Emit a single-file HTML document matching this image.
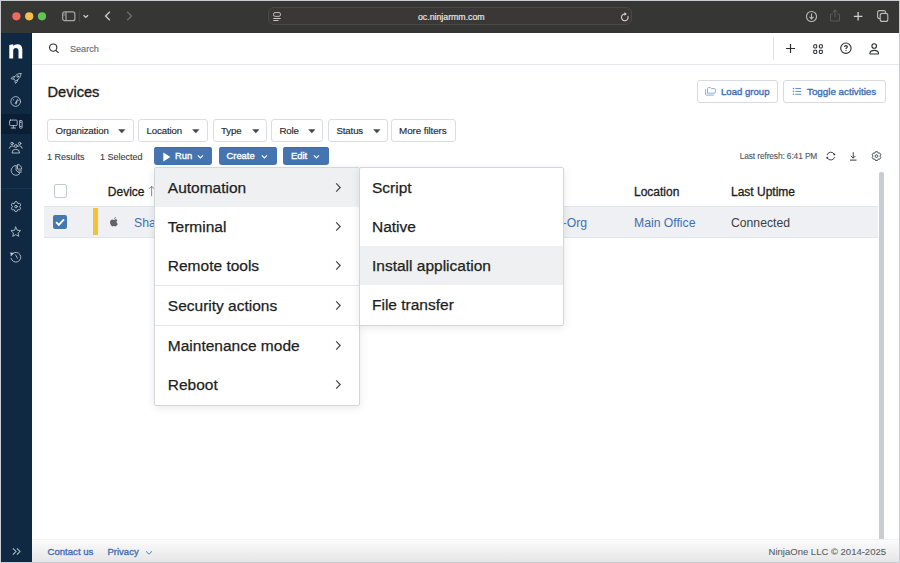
<!DOCTYPE html>
<html><head><meta charset="utf-8">
<style>
*{margin:0;padding:0;box-sizing:border-box}
html,body{width:900px;height:563px;overflow:hidden;background:#c9ccd1;font-family:"Liberation Sans",sans-serif}
.a{position:absolute}
.t{position:absolute;white-space:nowrap;line-height:1}
.sb{-webkit-text-stroke:0.35px currentColor}
.sb2{-webkit-text-stroke:0.3px currentColor}
#win{position:absolute;left:1px;top:1px;width:898px;height:561px;background:#fff;overflow:hidden}
#title{position:absolute;left:0;top:0;width:898px;height:32px;background:#363634}
#side{position:absolute;left:0;top:32px;width:31px;height:529px;background:#0e2941}
#topbar{position:absolute;left:31px;top:32px;width:867px;height:32px;background:#fff;border-bottom:1px solid #e4e7eb}
.fbtn{position:absolute;top:118px;height:23px;border:1px solid #dadde2;border-radius:3px;background:#fff}
.fbtn span{position:absolute;top:6px;font-size:9.7px;letter-spacing:-0.15px;color:#26292d;-webkit-text-stroke:0.15px #26292d;line-height:1;white-space:nowrap}
.bbtn{position:absolute;top:146px;height:18px;background:#4475b0;border-radius:3px;box-shadow:inset 0 1px 0 #3c6cab}
.bbtn span{position:absolute;top:4.3px;font-size:9.4px;color:#fff;-webkit-text-stroke:0.35px #fff;line-height:1;white-space:nowrap}
.menu{position:absolute;background:#fff;border:1px solid #d3d7dc;border-radius:2px;box-shadow:0 2px 8px rgba(0,0,0,0.09)}
.mi{position:absolute;left:0;height:39px;width:100%}
.mi span{position:absolute;left:12.8px;top:11.7px;font-size:15.5px;color:#1c1e21;-webkit-text-stroke:0.25px #1c1e21;line-height:1;white-space:nowrap}
</style></head><body>
<div id="win">
  <div id="title">
    <svg class="a" style="left:0;top:0" width="60" height="32" viewBox="0 0 60 32"><circle cx="15.4" cy="15.3" r="4.1" fill="#ee6a5f"/><circle cx="28.2" cy="15.3" r="4.1" fill="#f5bf4f"/><circle cx="41" cy="15.3" r="4.1" fill="#61c454"/></svg>
    <svg class="a" style="left:61px;top:10px" width="14" height="11" viewBox="0 0 14 11"><rect x="0.65" y="0.85" width="12.2" height="8.8" rx="2" fill="none" stroke="#a9a8a6" stroke-width="1.2"/><line x1="4" y1="1" x2="4" y2="9.6" stroke="#a9a8a6" stroke-width="1.2"/><line x1="2.1" y1="2.6" x2="2.1" y2="4.6" stroke="#a9a8a6" stroke-width="0.9"/></svg>
    <div class="a" style="left:78px;top:10px;width:1px;height:11px;background:#484745"></div>
    <svg class="a" style="left:82px;top:13px" width="8" height="6" viewBox="0 0 8 6"><path d="M0.6 1.2 L2.8 3.4 L5 1.2" fill="none" stroke="#cfcecc" stroke-width="1.3"/></svg>
    <svg class="a" style="left:101.5px;top:9.6px" width="9" height="11" viewBox="0 0 9 11"><path d="M6.8 0.8 L2.6 5 L6.8 9.2" fill="none" stroke="#c9c8c6" stroke-width="1.4"/></svg>
    <svg class="a" style="left:124px;top:9.6px" width="9" height="11" viewBox="0 0 9 11"><path d="M2.2 0.8 L6.4 5 L2.2 9.2" fill="none" stroke="#6d6c6a" stroke-width="1.4"/></svg>
    <div class="a" style="left:267px;top:6px;width:364px;height:18px;border:1px solid #4a4947;border-radius:6px;background:#393836"></div>
    <svg class="a" style="left:272px;top:11px" width="10" height="10" viewBox="0 0 10 10"><rect x="0.55" y="0.55" width="6.9" height="3.8" rx="1.5" fill="none" stroke="#c4c3c1" stroke-width="0.95"/><line x1="0.3" y1="6.5" x2="7.7" y2="6.5" stroke="#c4c3c1" stroke-width="1"/><line x1="0.3" y1="8.5" x2="5.5" y2="8.5" stroke="#c4c3c1" stroke-width="1"/></svg>
    <div class="t" style="left:417px;top:12px;font-size:8.75px;color:#e6e5e3;-webkit-text-stroke:0.2px #e6e5e3">oc.ninjarmm.com</div>
    <svg class="a" style="left:618px;top:10px" width="11" height="12" viewBox="0 -1 11 12"><path d="M5.80 2.05 A3.35 3.35 0 1 0 8.84 3.98" fill="none" stroke="#cfcecc" stroke-width="1.1"/><path d="M5.4 0.3 L7.8 2.05 L5.4 3.8 Z" fill="#dddcda"/></svg>
    <svg class="a" style="left:804px;top:8.7px" width="13" height="13" viewBox="0 0 13 13"><circle cx="6.5" cy="6.5" r="5" fill="none" stroke="#bdbcba" stroke-width="1.1"/><path d="M6.5 3.6 V8.9 M4.5 6.9 L6.5 8.9 L8.5 6.9" fill="none" stroke="#bdbcba" stroke-width="1.1"/></svg>
    <svg class="a" style="left:827.8px;top:8px" width="12" height="13" viewBox="0 0 12 13"><path d="M4 5 H2.5 Q1.5 5 1.5 6 V11 Q1.5 12 2.5 12 H9.5 Q10.5 12 10.5 11 V6 Q10.5 5 9.5 5 H8 M6 1 V8.2 M4 3 L6 1 L8 3" fill="none" stroke="#5a5957" stroke-width="1.1"/></svg>
    <svg class="a" style="left:852.3px;top:9.5px" width="11" height="11" viewBox="0 0 11 11"><path d="M5.1 1 V9.6 M0.8 5.3 H9.4" fill="none" stroke="#cfcecc" stroke-width="1.3"/></svg>
    <svg class="a" style="left:875.5px;top:9.2px" width="13" height="13" viewBox="0 0 13 13"><rect x="0.6" y="0.6" width="8" height="8" rx="2" fill="none" stroke="#bdbcba" stroke-width="1.1"/><rect x="3.2" y="3.4" width="7.6" height="8" rx="2" fill="#363634" stroke="#bdbcba" stroke-width="1.1"/></svg>

  </div>
  <div id="side">
    <svg class="a" style="left:0;top:0" width="31" height="40" viewBox="0 0 31 40"><path d="M8.3 12 L12.2 11.3 V12.8 Q13.6 11.3 16.2 11.3 Q21.3 11.3 21.3 16.6 V25.4 H17.5 V17.4 Q17.5 14.9 15.1 14.9 Q12.2 14.9 12.2 17.6 V25.4 H8.3 Z" fill="#fff"/></svg>
    <div class="a" style="left:0;top:81px;width:31px;height:20px;background:#0a1f34"></div>
    <div class="a" style="left:30px;top:0;width:1px;height:141px;background:#0a2135"></div>
    <svg class="a" style="left:-1px;top:-1px" width="32" height="240" viewBox="0 0 32 240" fill="none" stroke="#c2cad4" stroke-width="0.85" stroke-linecap="round" stroke-linejoin="round">
      <!-- rocket -->
      <path d="M20.9 41.5 C18 41.3 15 43 13.6 46.8 L15.6 48.8 C19.4 47.4 21.1 44.4 20.9 41.5 Z"/>
      <circle cx="17.9" cy="44.5" r="0.9"/>
      <path d="M14.4 44.4 Q12.1 44.5 11.1 46.6 L13.3 47.3 M17.7 48 Q17.6 50.3 15.5 51.3 L14.8 49.2"/>
      <!-- dashboard -->
      <circle cx="15.7" cy="69.5" r="4.85"/>
      <path d="M15.1 71.2 L17.7 67.1 L16.5 71.7 Z" fill="#c2cad4" stroke-width="0.5"/>
      <path d="M13.1 67.5 L13.6 67.9 M18.7 68.3 L19.2 68.1"/>
      <!-- devices -->
      <rect x="9.6" y="88.1" width="7.6" height="5.5" rx="0.9"/>
      <path d="M13.4 93.4 V95.9 M11.2 96 H15.6"/>
      <rect x="19.6" y="88.5" width="2.5" height="7.7" rx="0.6"/>
      <circle cx="20.85" cy="90.2" r="0.7" fill="#c2cad4" stroke="none"/><circle cx="20.85" cy="94.4" r="0.7" fill="#c2cad4" stroke="none"/>
      <!-- users -->
      <circle cx="15.85" cy="114" r="1.45"/>
      <path d="M12 120.6 Q12 117.2 15.8 117.2 Q19.6 117.2 19.6 120.6 Z"/>
      <circle cx="12" cy="111.5" r="1.2"/><circle cx="19.7" cy="111.5" r="1.2"/>
      <path d="M9.4 116.3 Q9.6 113.9 12.1 113.9 Q12.9 113.9 13.5 114.3 M22.2 116.3 Q22 113.9 19.6 113.9 Q18.8 113.9 18.2 114.3"/>
      <!-- pie -->
      <g transform="translate(0.4,-0.8)">
      <path d="M15.5 134.3 A4.9 4.9 0 1 0 19.4 142.3 L15.9 139.2 Z"/>
      <path d="M17.1 137.5 V133.3 A4.2 4.2 0 0 1 21.3 137.5 Z"/>
      <path d="M18.2 139.7 L21.2 139.7 M18.9 141.1 L20.6 141.1" stroke-width="0.8"/></g>
      <!-- gear -->
      <path d="M14.23 171.53 L15.05 169.69 L16.95 169.69 L17.77 171.53 L19.77 171.32 L20.73 172.97 L19.55 174.60 L20.73 176.23 L19.77 177.88 L17.77 177.67 L16.95 179.51 L15.05 179.51 L14.23 177.67 L12.23 177.88 L11.27 176.23 L12.45 174.60 L11.27 172.97 L12.23 171.32 Z" stroke-linejoin="miter"/>
      <circle cx="16" cy="174.6" r="1.3"/>
      <!-- star -->
      <path d="M15.75 195.10 L17.19 198.22 L20.60 198.62 L18.08 200.96 L18.75 204.33 L15.75 202.65 L12.75 204.33 L13.42 200.96 L10.90 198.62 L14.31 198.22 Z"/>
      <!-- history -->
      <path d="M12.52 221.56 A4.9 4.9 0 1 1 11.07 226.47"/>
      <path d="M10.6 220.7 L13.7 221.2 L11.2 224 Z" fill="#c2cad4" stroke-width="0.4"/>
      <path d="M15.6 222.9 L17.4 226.2"/>
    </svg>
    <div class="a" style="left:0;top:155px;width:31px;height:1px;background:#173553"></div>
    <svg class="a" style="left:0;top:508px" width="31" height="20" viewBox="0 0 31 20" fill="none" stroke="#b9c2cc" stroke-width="1.05"><path d="M11.9 7.4 L15 10.5 L11.9 13.6 M15.9 7.4 L19 10.5 L15.9 13.6"/></svg>
  </div>
  
  <div id="topbar">
    <svg class="a" style="left:16px;top:10px" width="12" height="12" viewBox="0 0 12 12"><circle cx="5.2" cy="4.6" r="3.65" fill="none" stroke="#2b2e33" stroke-width="1.15"/><path d="M7.9 7.3 L10.5 9.9" stroke="#2b2e33" stroke-width="1.2"/></svg>
    <div class="t" style="left:38px;top:12px;font-size:9.1px;color:#676c74;-webkit-text-stroke:0.15px #676c74">Search</div>
    <div class="a" style="left:740.5px;top:4px;width:1px;height:23px;background:#dfe3e8"></div>
    <svg class="a" style="left:753px;top:10.2px" width="11" height="11" viewBox="0 0 11 11"><path d="M5.5 1 V10 M1 5.5 H10" stroke="#2b2e33" stroke-width="1.2"/></svg>
    <svg class="a" style="left:781px;top:11px" width="11" height="11" viewBox="0 0 11 11" fill="none" stroke="#2b2e33" stroke-width="1.05"><rect x="0.75" y="0.8" width="3" height="3.1" rx="0.8"/><rect x="6.35" y="0.8" width="3" height="3.1" rx="0.8"/><rect x="0.75" y="6.3" width="3" height="3.1" rx="0.8"/><rect x="6.35" y="6.3" width="3" height="3.1" rx="0.8"/></svg>
    <svg class="a" style="left:808px;top:9px" width="13" height="13" viewBox="0 0 13 13" fill="none" stroke="#2b2e33" stroke-width="1.1"><circle cx="5.9" cy="6.2" r="5.2"/><path d="M4.6 5 Q4.6 3.6 5.95 3.6 Q7.3 3.6 7.3 4.8 Q7.3 5.6 6.5 6 Q5.95 6.3 5.95 7" stroke-width="1.2"/><circle cx="5.95" cy="8.6" r="0.65" fill="#2b2e33" stroke="none"/></svg>
    <svg class="a" style="left:837px;top:10px" width="11" height="12" viewBox="0 0 11 12" fill="none" stroke="#2b2e33" stroke-width="1.1"><circle cx="5.2" cy="3" r="2.3"/><path d="M1.6 11 H8.8 Q9.6 11 9.5 10.2 Q9 7.4 5.2 7.4 Q1.4 7.4 0.9 10.2 Q0.8 11 1.6 11 Z"/></svg>
  </div>
  <div class="t sb" style="left:46.5px;top:84px;font-size:14.6px;color:#1b1d20">Devices</div>
  <div class="a" style="left:696px;top:79px;width:81px;height:23px;border:1px solid #d6dbe1;border-radius:3px"></div>
  <svg class="a" style="left:703px;top:85px" width="14" height="12" viewBox="0 0 14 12" fill="none" stroke="#86a9d6" stroke-width="0.95"><path d="M3.5 7.2 V2.5 Q3.5 1.6 4.4 1.6 H6.5 L7.5 2.6 H10.5 Q11.3 2.6 11.3 3.4 V6.4 Q11.3 7.2 10.5 7.2 Z"/><path d="M1.6 3.1 V8.1 Q1.6 9.1 2.6 9.1 H9.8"/></svg>
  <div class="t sb" style="left:720px;top:85.5px;font-size:9.6px;color:#3f6eb0">Load group</div>
  <div class="a" style="left:782px;top:79px;width:103px;height:23px;border:1px solid #d6dbe1;border-radius:3px"></div>
  <svg class="a" style="left:791px;top:86px" width="11" height="10" viewBox="0 0 11 10"><g fill="#4f7dbd"><circle cx="1.5" cy="1.55" r="0.8"/><circle cx="1.5" cy="4.4" r="0.8"/><circle cx="1.5" cy="7.3" r="0.8"/></g><path d="M1.5 1.6 V7.3" stroke="#c5d5ea" stroke-width="0.5"/><path d="M3.4 1.55 H9.1 M3.4 4.4 H9.1 M3.4 7.3 H9.1" stroke="#5a85c0" stroke-width="0.95"/></svg>
  <div class="t sb" style="left:806px;top:85.5px;font-size:9.8px;color:#3f6eb0">Toggle activities</div>

  <div class="fbtn" style="left:46px;width:87px"><span style="left:7.5px">Organization</span><svg class="a" style="left:70.2px;top:9px" width="8" height="5" viewBox="0 0 8 5"><path d="M0.7 0.6 H6.9 L3.8 4.1 Z" fill="#43474d" stroke="#43474d" stroke-width="0.5" stroke-linejoin="round"/></svg></div>
  <div class="fbtn" style="left:137px;width:70px"><span style="left:7.5px">Location</span><svg class="a" style="left:53.2px;top:9px" width="8" height="5" viewBox="0 0 8 5"><path d="M0.7 0.6 H6.9 L3.8 4.1 Z" fill="#43474d" stroke="#43474d" stroke-width="0.5" stroke-linejoin="round"/></svg></div>
  <div class="fbtn" style="left:212px;width:54px"><span style="left:7px">Type</span><svg class="a" style="left:38.2px;top:9px" width="8" height="5" viewBox="0 0 8 5"><path d="M0.7 0.6 H6.9 L3.8 4.1 Z" fill="#43474d" stroke="#43474d" stroke-width="0.5" stroke-linejoin="round"/></svg></div>
  <div class="fbtn" style="left:270px;width:52px"><span style="left:7.5px">Role</span><svg class="a" style="left:36.2px;top:9px" width="8" height="5" viewBox="0 0 8 5"><path d="M0.7 0.6 H6.9 L3.8 4.1 Z" fill="#43474d" stroke="#43474d" stroke-width="0.5" stroke-linejoin="round"/></svg></div>
  <div class="fbtn" style="left:327px;width:60px"><span style="left:7.5px">Status</span><svg class="a" style="left:44.2px;top:9px" width="8" height="5" viewBox="0 0 8 5"><path d="M0.7 0.6 H6.9 L3.8 4.1 Z" fill="#43474d" stroke="#43474d" stroke-width="0.5" stroke-linejoin="round"/></svg></div>
  <div class="fbtn" style="left:390px;width:65px"><span style="left:7px;font-size:9.9px;letter-spacing:-0.1px">More filters</span></div>

  <div class="t" style="left:46px;top:151.5px;font-size:9px;color:#3d4147;-webkit-text-stroke:0.12px #3d4147">1 Results</div>
  <div class="t" style="left:99px;top:151.5px;font-size:9px;color:#3d4147;-webkit-text-stroke:0.12px #3d4147">1 Selected</div>
  <div class="bbtn" style="left:153px;width:58px"><svg class="a" style="left:8.5px;top:4.5px" width="8" height="10" viewBox="0 0 8 10"><path d="M0.3 0.4 L7.4 5 L0.3 9.6 Z" fill="#fff"/></svg><span style="left:21px">Run</span><svg class="a" style="left:42.5px;top:7px" width="7" height="5" viewBox="0 0 7 5"><path d="M0.8 1.4 L3.4 4 L6 1.4" fill="none" stroke="#fff" stroke-width="1.1"/></svg></div>
  <div class="bbtn" style="left:217.5px;width:58px"><span style="left:8px">Create</span><svg class="a" style="left:42.5px;top:7px" width="7" height="5" viewBox="0 0 7 5"><path d="M0.8 1.4 L3.4 4 L6 1.4" fill="none" stroke="#fff" stroke-width="1.1"/></svg></div>
  <div class="bbtn" style="left:282px;width:45.5px"><span style="left:8px">Edit</span><svg class="a" style="left:30px;top:7px" width="7" height="5" viewBox="0 0 7 5"><path d="M0.8 1.4 L3.4 4 L6 1.4" fill="none" stroke="#fff" stroke-width="1.1"/></svg></div>

  <div class="t" style="right:81.8px;top:151.3px;font-size:8.4px;letter-spacing:-0.12px;color:#50555c;-webkit-text-stroke:0.1px #50555c">Last refresh: 6:41 PM</div>
  <svg class="a" style="left:824px;top:149px" width="12" height="12" viewBox="0 0 12 12" fill="none" stroke="#3a3e44" stroke-width="0.95"><path d="M2.03 5.09 A3.9 3.9 0 0 1 9.33 4.45 M9.57 7.11 A3.9 3.9 0 0 1 2.27 7.75"/><circle cx="9.33" cy="4.45" r="0.9" fill="#2b2e33" stroke="none"/><circle cx="2.27" cy="7.75" r="0.9" fill="#2b2e33" stroke="none"/></svg>
  <svg class="a" style="left:848px;top:150px" width="9" height="11" viewBox="0 0 9 11" fill="none" stroke="#33373d" stroke-width="0.9"><path d="M4.25 1.2 V7 M2 4.9 L4.25 7.2 L6.5 4.9"/><path d="M1 9.1 H7.5" stroke-width="1"/></svg>
  <svg class="a" style="left:870px;top:149px" width="12" height="12" viewBox="0 0 12 12" fill="none" stroke="#3a3e44" stroke-width="0.9" stroke-linejoin="round"><path d="M3.80 3.16 L4.49 1.72 L6.51 1.72 L7.20 3.16 L8.79 3.03 L9.80 4.78 L8.90 6.10 L9.80 7.42 L8.79 9.17 L7.20 9.04 L6.51 10.48 L4.49 10.48 L3.80 9.04 L2.21 9.17 L1.20 7.42 L2.10 6.10 L1.20 4.78 L2.21 3.03 Z"/><circle cx="5.5" cy="6.1" r="1.35"/></svg>

  <!-- table -->
  <div class="a" style="left:52.7px;top:183.4px;width:13.3px;height:13.3px;border:1px solid #c5cad1;border-radius:2px;background:#fff"></div>
  <div class="t sb2" style="left:106.8px;top:185px;font-size:12px;color:#1b1d20">Device</div>
  <svg class="a" style="left:146px;top:184px" width="8" height="12" viewBox="0 0 8 12" fill="none" stroke="#6a6e75" stroke-width="0.8"><path d="M4.6 1.2 V11.2 M1.9 3.9 L4.6 1.2 L7.3 3.9"/></svg>
  <div class="t sb2" style="left:633px;top:185px;font-size:12px;color:#1b1d20">Location</div>
  <div class="t sb2" style="left:730px;top:185px;font-size:12px;color:#1b1d20">Last Uptime</div>
  <div class="a" style="left:43px;top:205px;width:834px;height:32px;background:#eef0f3;border-top:1px solid #e2e5e9;border-bottom:1px solid #e2e5e9"></div>
  <div class="a" style="left:52px;top:214px;width:14px;height:14px;border-radius:2px;background:#4577b0"></div>
  <svg class="a" style="left:52px;top:214px" width="14" height="14" viewBox="0 0 14 14"><path d="M3.1 7.2 L5.8 9.9 L11 4.3" fill="none" stroke="#fff" stroke-width="1.85"/></svg>
  <div class="a" style="left:91.8px;top:207.4px;width:4.9px;height:26.6px;background:#f2c335"></div>
  <svg class="a" style="left:108px;top:215px" width="10" height="12" viewBox="0 0 10 12"><path d="M4.95 3.9 Q3.9 3.3 2.9 3.4 Q1 3.7 1 6.3 Q1 8.6 2.6 10.1 Q3.2 10.6 3.9 10.3 Q4.5 10 4.95 10 Q5.4 10 6 10.3 Q6.7 10.6 7.3 10 Q8.3 9 8.8 7.9 Q7.6 7.3 7.5 6 Q7.5 4.9 8.5 4.2 Q7.9 3.4 6.9 3.3 Q6 3.3 4.95 3.9 Z M5 3 Q5 1.4 7 1 Q7.1 2.7 5 3 Z" fill="#5f636a"/></svg>
  <div class="t" style="left:133px;top:215.5px;font-size:12.2px;color:#4171b5">Shannon-MacBook-Pro</div>
  <div class="t" style="right:312px;top:215.5px;font-size:12.2px;color:#4171b5">Main-Org</div>
  <div class="t" style="left:633px;top:215.5px;font-size:12.2px;color:#4171b5">Main Office</div>
  <div class="t" style="left:730px;top:215.5px;font-size:12.2px;color:#3b3e43">Connected</div>
  <div class="a" style="left:878px;top:170.5px;width:5px;height:370px;background:#c8cdd2;border-radius:2px"></div>

  <!-- footer -->
  <div class="a" style="left:31px;top:538px;width:867px;height:23px;background:linear-gradient(#fbfbfb,#e6e6e7);border-top:1px solid #f0f1f2"></div>
  <div class="t sb" style="left:46.5px;top:546px;font-size:9.6px;color:#4171b5">Contact us</div>
  <div class="t sb" style="left:106.5px;top:546.2px;font-size:9.5px;color:#4171b5">Privacy</div>
  <svg class="a" style="left:144px;top:549px" width="8" height="6" viewBox="0 0 8 6"><path d="M1 1.3 L4 4.2 L7 1.3" fill="none" stroke="#4171b5" stroke-width="0.9"/></svg>
  <div class="t" style="right:13px;top:545.6px;font-size:9.5px;color:#5a5e65;-webkit-text-stroke:0.1px #5a5e65">NinjaOne LLC &#169; 2014-2025</div>

  <!-- menus -->
  <div class="menu" style="left:153px;top:166px;width:206px;height:239px">
    <div class="mi" style="top:0;background:#eef0f2"><span>Automation</span><svg class="a" style="left:179px;top:14px" width="9" height="11" viewBox="0 0 9 11"><path d="M2.2 1.3 L6.2 5.5 L2.2 9.7" fill="none" stroke="#43464b" stroke-width="1.2"/></svg></div>
    <div class="mi" style="top:39px"><span>Terminal</span><svg class="a" style="left:179px;top:14px" width="9" height="11" viewBox="0 0 9 11"><path d="M2.2 1.3 L6.2 5.5 L2.2 9.7" fill="none" stroke="#43464b" stroke-width="1.2"/></svg></div>
    <div class="mi" style="top:78px"><span>Remote tools</span><svg class="a" style="left:179px;top:14px" width="9" height="11" viewBox="0 0 9 11"><path d="M2.2 1.3 L6.2 5.5 L2.2 9.7" fill="none" stroke="#43464b" stroke-width="1.2"/></svg></div>
    <div class="a" style="left:0;top:117px;width:100%;height:1px;background:#e2e5e9"></div>
    <div class="mi" style="top:118px"><span>Security actions</span><svg class="a" style="left:179px;top:14px" width="9" height="11" viewBox="0 0 9 11"><path d="M2.2 1.3 L6.2 5.5 L2.2 9.7" fill="none" stroke="#43464b" stroke-width="1.2"/></svg></div>
    <div class="a" style="left:0;top:157px;width:100%;height:1px;background:#e2e5e9"></div>
    <div class="mi" style="top:158px"><span>Maintenance mode</span><svg class="a" style="left:179px;top:14px" width="9" height="11" viewBox="0 0 9 11"><path d="M2.2 1.3 L6.2 5.5 L2.2 9.7" fill="none" stroke="#43464b" stroke-width="1.2"/></svg></div>
    <div class="mi" style="top:197px"><span>Reboot</span><svg class="a" style="left:179px;top:14px" width="9" height="11" viewBox="0 0 9 11"><path d="M2.2 1.3 L6.2 5.5 L2.2 9.7" fill="none" stroke="#43464b" stroke-width="1.2"/></svg></div>
  </div>
  <div class="menu" style="left:358px;top:166px;width:205px;height:159px">
    <div class="mi" style="top:0"><span style="left:12px">Script</span></div>
    <div class="mi" style="top:39px"><span style="left:12px">Native</span></div>
    <div class="mi" style="top:78px;background:#eef0f2"><span style="left:12px">Install application</span></div>
    <div class="mi" style="top:117px"><span style="left:12px">File transfer</span></div>
  </div>

</div>
</body></html>
